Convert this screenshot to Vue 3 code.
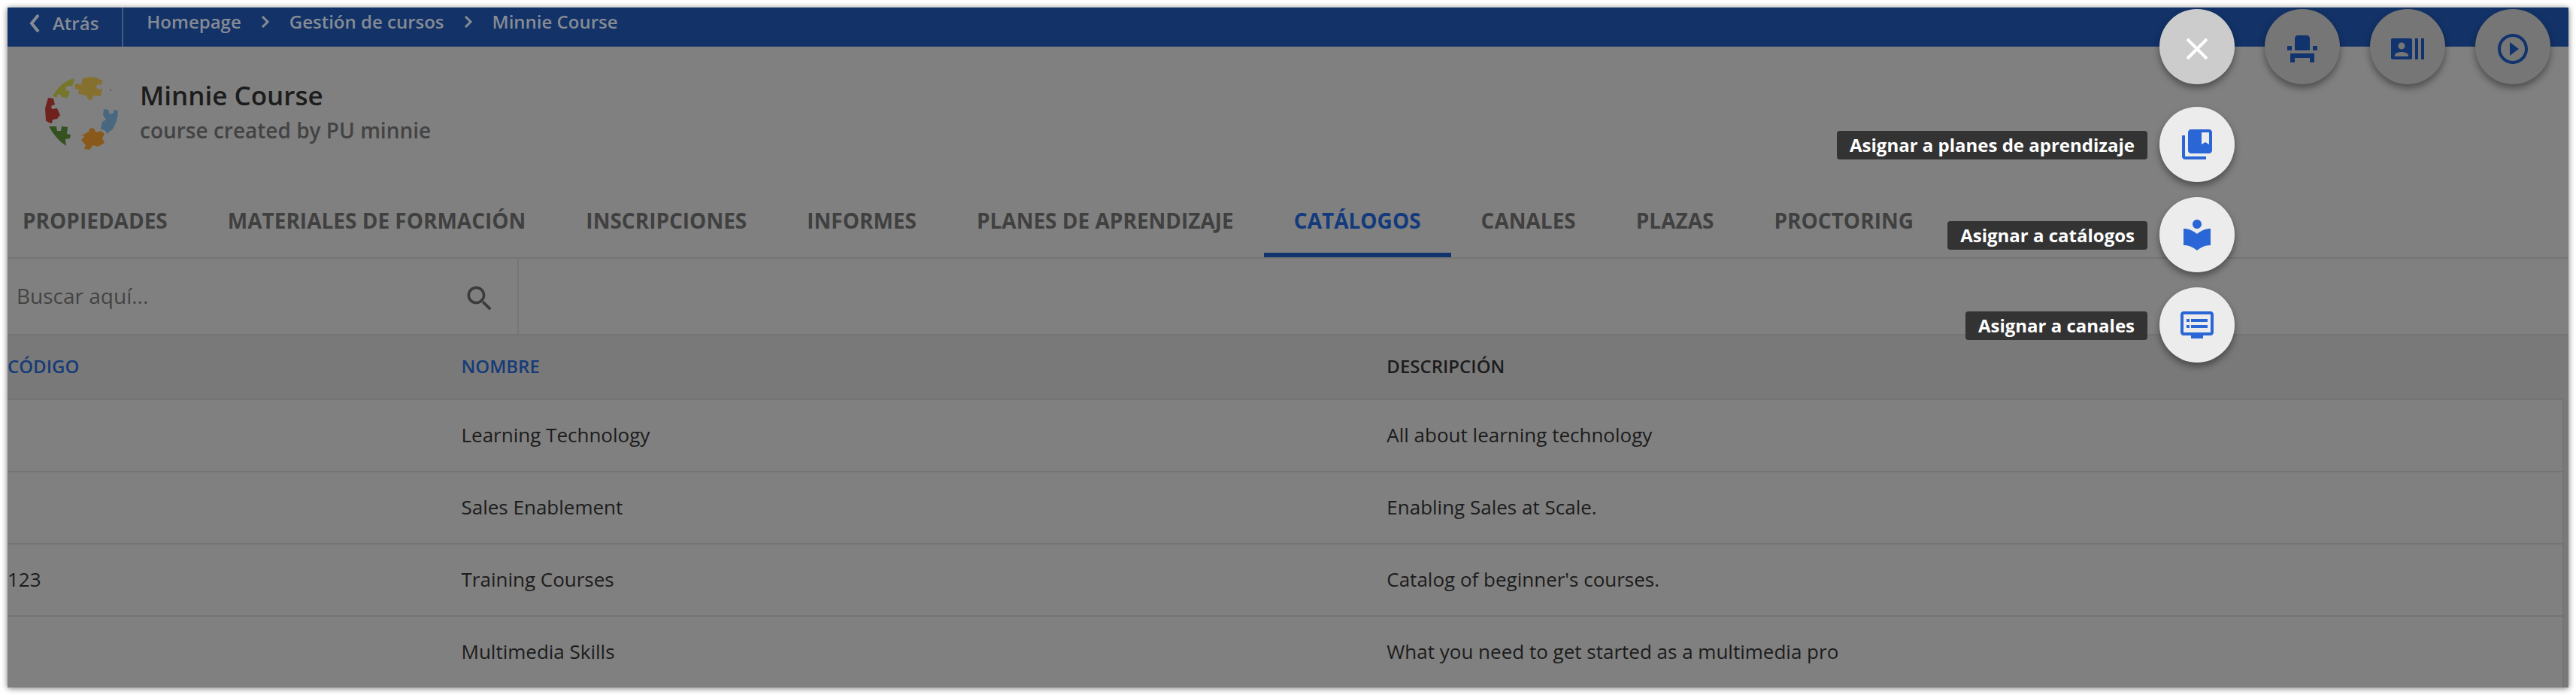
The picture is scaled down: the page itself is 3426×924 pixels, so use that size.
<script setup>
import { ref } from 'vue'

const crumbs = ['Homepage', 'Gestión de cursos', 'Minnie Course']
const tabs = [
  'PROPIEDADES',
  'MATERIALES DE FORMACIÓN',
  'INSCRIPCIONES',
  'INFORMES',
  'PLANES DE APRENDIZAJE',
  'CATÁLOGOS',
  'CANALES',
  'PLAZAS',
  'PROCTORING'
]
const active = ref('CATÁLOGOS')
const query = ref('')
const rows = [
  { code: '', name: 'Learning Technology', text: 'All about learning technology' },
  { code: '', name: 'Sales Enablement', text: 'Enabling Sales at Scale.' },
  { code: '123', name: 'Training Courses', text: "Catalog of beginner's courses." },
  { code: '', name: 'Multimedia Skills', text: 'What you need to get started as a multimedia pro' }
]
const shortcuts = [
  {
    label: 'Plazas',
    path: 'M4 18v3h3v-3h10v3h3v-6H4v3zm15-8h3v3h-3v-3zM2 10h3v3H2v-3zm15 3H7V5c0-1.100.9-2 2-2h6c1.100 0 2 .9 2 2v8z'
  },
  {
    label: 'Inscripciones',
    path: 'M21 5v14h2V5h-2zm-4 14h2V5h-2v14zM14 5H2c-.55 0-1 .45-1 1v12c0 .55.45 1 1 1h12c.55 0 1-.45 1-1V6c0-.55-.45-1-1-1zM8 7.750c1.240 0 2.250 1.010 2.250 2.250S9.240 12.250 8 12.250 5.750 11.240 5.750 10 6.760 7.750 8 7.750zM12.500 17h-9v-.750c0-1.500 3-2.250 4.500-2.250s4.500.750 4.500 2.250V17z'
  },
  {
    label: 'Reproducir',
    path: 'M10 16.500l6-4.500-6-4.500v9zM12 2C6.480 2 2 6.480 2 12s4.480 10 10 10 10-4.480 10-10S17.520 2 12 2zm0 18c-4.410 0-8-3.590-8-8s3.590-8 8-8 8 3.590 8 8-3.590 8-8 8z'
  }
]
const actions = [
  {
    label: 'Asignar a planes de aprendizaje',
    path: 'M4 6H2v14c0 1.100.9 2 2 2h14v-2H4V6zM20 2H8c-1.100 0-2 .9-2 2v12c0 1.100.9 2 2 2h12c1.100 0 2-.9 2-2V4c0-1.100-.9-2-2-2zm0 10l-2.500-1.500L15 12V4h5v8z'
  },
  {
    label: 'Asignar a catálogos',
    path: 'M12 11.550C9.640 9.350 6.480 8 3 8v11c3.480 0 6.640 1.350 9 3.550 2.360-2.190 5.520-3.550 9-3.550V8c-3.480 0-6.640 1.350-9 3.550zM12 8c1.660 0 3-1.340 3-3s-1.340-3-3-3-3 1.340-3 3 1.340 3 3 3z'
  },
  {
    label: 'Asignar a canales',
    path: 'M21 3H3c-1.100 0-2 .9-2 2v12c0 1.100.9 2 2 2h5v2h8v-2h5c1.100 0 1.990-.9 1.990-2L23 5c0-1.100-.9-2-2-2zm0 14H3V5h18v12zm-2-9H8v2h11V8zm0 4H8v2h11v-2zM7 8H5v2h2V8zm0 4H5v2h2v-2z'
  }
]
</script>

<template>
  <main class="frame">
    <header class="topbar">
      <button class="back" type="button">
        <svg class="back-icon" viewBox="0 0 16 24" aria-hidden="true"><path d="M13 1L4 12l9 11" /></svg>
        Atrás
      </button>
      <nav class="crumbs" aria-label="Ruta">
        <template v-for="(crumb, i) in crumbs" :key="crumb">
          <svg v-if="i" class="sep" viewBox="0 0 12 16" aria-hidden="true"><path d="M2 1l7 7-7 7" /></svg>
          <a href="#">{{ crumb }}</a>
        </template>
      </nav>
    </header>

    <section class="course">
      <svg class="logo" viewBox="0 0 100 100" role="img" aria-label="Minnie Course">
        <path fill="#76762b" d="M11 25Q20 9 38 3l1 4-4 7-3-1-5 2 1 4 5 2-3 8-8-1-2-4-4 1v4l-6-2z" />
        <path fill="#85702f" d="M50 3l8-1v-1l9 1 9 4-1 6-6-1-1 5 5 2 3-1-2 10-10-1-1 5-5 1-3-6-11-2 1-6-5-1-1-5 4-2 5 2z" />
        <path fill="#6f231f" d="M4 29l7 1 2 8-5 2 1 4 7-1 4 9-4 5-6 1-1 5-4-1-3-2H1l-1-17z" />
        <path fill="#34521f" d="M5 67h10l1 6h5l1-6 8 1-1 9 5 1-1 5-6 1 1 9Q14 84 5 67z" />
        <path fill="#88591a" d="M47 80l11-6 1-4 5-1 4 6 6-2 5 4-3 6 3 6-9 5-6-2-5 6-7-1 2-5-6-7 4-4-3-3z" />
        <path fill="#486880" d="M78 44l6 1 2 6 5-2v-4l6 1q0 14-8 26l-3 1-3 4-3-4-6-3 2-9 5-3-4-6z" />
        <circle cx="87" cy="19" r="1" fill="#50456c" />
      </svg>
      <div class="titles">
        <h1>Minnie Course</h1>
        <p>course created by PU minnie</p>
      </div>
    </section>

    <nav class="tabs" aria-label="Secciones del curso">
      <button
        v-for="tab in tabs"
        :key="tab"
        type="button"
        class="tab"
        :class="{ active: active === tab }"
        @click="active = tab"
      >{{ tab }}</button>
    </nav>

    <form class="search" @submit.prevent>
      <input v-model="query" type="text" placeholder="Buscar aquí..." aria-label="Buscar aquí" />
      <button type="submit" aria-label="Buscar">
        <svg viewBox="0 0 24 24" aria-hidden="true"><path d="M15.500 14h-.790l-.280-.270C15.410 12.590 16 11.110 16 9.500 16 5.910 13.090 3 9.500 3S3 5.910 3 9.500 5.910 16 9.500 16c1.610 0 3.090-.590 4.230-1.570l.270.280v.790l5 4.990L20.490 19l-4.990-5zm-6 0C7.010 14 5 11.990 5 9.500S7.010 5 9.500 5 14 7.010 14 9.500 11.990 14 9.500 14z" /></svg>
      </button>
    </form>

    <div class="grid">
      <table>
        <colgroup><col class="c-code" /><col class="c-name" /><col /></colgroup>
        <thead>
          <tr>
            <th scope="col"><a href="#">CÓDIGO</a></th>
            <th scope="col"><a href="#">NOMBRE</a></th>
            <th scope="col">DESCRIPCIÓN</th>
          </tr>
        </thead>
        <tbody>
          <tr v-for="row in rows" :key="row.name">
            <td>{{ row.code }}</td>
            <td>{{ row.name }}</td>
            <td>{{ row.text }}</td>
          </tr>
        </tbody>
      </table>
    </div>

    <div class="fabs">
      <div class="speed-dial">
        <button class="fab top close" type="button" aria-label="Cerrar">
          <svg viewBox="0 0 24 24" aria-hidden="true"><path d="M5.500 5.500l13 13M18.500 5.500l-13 13" /></svg>
        </button>
        <ul class="actions">
          <li v-for="(action, i) in actions" :key="action.label">
            <label :for="'action-' + i">{{ action.label }}</label>
            <button :id="'action-' + i" class="fab action" type="button">
              <svg viewBox="0 0 24 24" aria-hidden="true"><path :d="action.path" /></svg>
            </button>
          </li>
        </ul>
      </div>
      <button v-for="item in shortcuts" :key="item.label" class="fab top dim" type="button" :aria-label="item.label">
        <svg viewBox="0 0 24 24" aria-hidden="true"><path :d="item.path" /></svg>
      </button>
    </div>
  </main>
</template>

<style>
body {
  background: #fff;
}
</style>

<style scoped>
* {
  box-sizing: border-box;
}
.frame {
  position: relative;
  margin: 10px;
  background: #808080;
  box-shadow: 0 1px 8px rgba(0, 0, 0, 0.55);
  font-family: "Open Sans", "Noto Sans", sans-serif;
  font-size: 26px;
  color: #1c1c1c;
}
button,
input {
  margin: 0;
  padding: 0;
  border: 0;
  background: none;
  font: inherit;
  color: inherit;
}
a {
  color: inherit;
  text-decoration: none;
}
.topbar {
  display: flex;
  height: 52px;
  background: #123268;
  color: #868b94;
  font-size: 24px;
  font-weight: 600;
  line-height: 36px;
}
.back {
  display: flex;
  align-items: center;
  gap: 16px;
  padding: 0 31px 10px 28px;
  border-right: 2px solid #475b7f;
}
.back-icon {
  width: 16px;
  height: 24px;
}
.back-icon path,
.sep path {
  fill: none;
  stroke: currentColor;
  stroke-width: 4;
}
.sep path {
  stroke-width: 3;
}
.crumbs {
  display: flex;
  align-items: center;
  gap: 26px;
  padding: 0 31px 14px;
}
.sep {
  width: 12px;
  height: 16px;
}
.course {
  display: flex;
  align-items: flex-start;
  gap: 26px;
  padding: 39px 50px 0;
}
.logo {
  width: 100px;
  height: 100px;
}
.titles h1 {
  margin: 0;
  padding-top: 2px;
  font-size: 35px;
  font-weight: 600;
  line-height: 48px;
}
.titles p {
  margin: 0;
  font-size: 28px;
  font-weight: 600;
  line-height: 44px;
  color: #434343;
}
.tabs {
  display: flex;
  height: 100px;
  margin-top: 43px;
  border-bottom: 2px solid #747474;
}
.tab {
  padding: 6px 40px 0;
  border-bottom: 6px solid transparent;
  font-size: 28px;
  font-weight: 700;
  color: #404040;
  white-space: nowrap;
}
.tab:first-child {
  padding-left: 20px;
}
.tab.active {
  color: #123a7c;
  border-color: #12346e;
}
.search {
  display: flex;
  align-items: center;
  width: 680px;
  height: 100px;
  padding-right: 28px;
  border-right: 2px solid #767676;
}
.search input {
  flex: 1;
  min-width: 0;
  height: 98px;
  padding: 0 12px 2px;
  outline: 0;
  font-size: 28px;
}
.search input::placeholder {
  color: #444;
  opacity: 1;
}
.search button {
  display: flex;
  padding-top: 6px;
}
.search svg {
  width: 44px;
  height: 44px;
  fill: #3c3c3c;
}
.grid {
  padding-right: 6px;
  border-top: 2px solid #747474;
  background: #797979;
}
table {
  width: 100%;
  table-layout: fixed;
  border-collapse: separate;
  border-spacing: 0;
}
.c-code {
  width: 17.75%;
}
.c-name {
  width: 36.2%;
}
th,
td {
  padding: 0 0 2px;
  border-bottom: 2px solid #747474;
  text-align: left;
  white-space: nowrap;
}
th {
  height: 86px;
  padding-bottom: 4px;
  font-size: 24px;
  font-weight: 600;
}
th a {
  color: #153b78;
}
tbody {
  background: #808080;
}
td {
  height: 96px;
}
td:last-child {
  border-right: 2px solid #747474;
}
tbody tr:last-child td {
  height: 94px;
  border-bottom: 0;
}
.fabs {
  position: absolute;
  top: 2px;
  right: 24px;
  display: flex;
  gap: 40px;
}
.speed-dial {
  position: relative;
}
.fab {
  display: flex;
  align-items: center;
  justify-content: center;
  width: 100px;
  height: 100px;
  border-radius: 50%;
  box-shadow: 0 5px 10px rgba(0, 0, 0, 0.4);
}
.fab svg {
  width: 48px;
  height: 48px;
  fill: currentColor;
}
.top {
  padding-top: 6px;
}
.dim {
  background: #767676;
  color: #12346e;
}
.close {
  background: #ccc;
  color: #fff;
}
.close path {
  stroke: currentColor;
  stroke-width: 2;
}
.action {
  background: #ececec;
  color: #2a66d6;
}
.actions {
  position: absolute;
  top: 130px;
  right: 0;
  display: flex;
  flex-direction: column;
  gap: 20px;
  margin: 0;
  padding: 0;
  list-style: none;
}
.actions li {
  display: flex;
  align-items: center;
  justify-content: flex-end;
  gap: 16px;
}
.actions label {
  margin-top: 2px;
  padding: 0 17px;
  border-radius: 4px;
  background: #333;
  color: #fff;
  font-size: 24px;
  font-weight: 700;
  line-height: 38px;
  white-space: nowrap;
}
</style>
